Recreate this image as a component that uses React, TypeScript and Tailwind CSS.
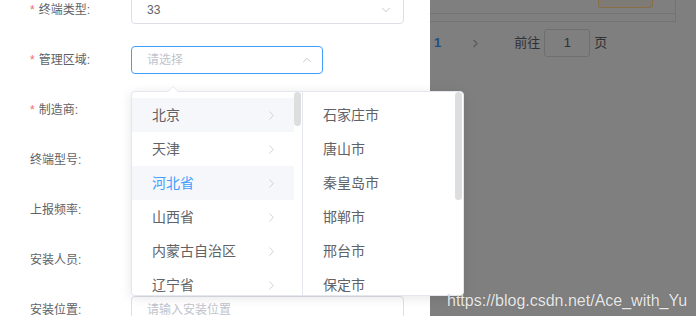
import { ChevronDown, ChevronUp, ChevronRight } from 'lucide-react'

interface Field {
  label: string
  required: boolean
  width: number
  value?: string
  placeholder?: string
  icon?: 'down' | 'up'
  focus?: boolean
}

const fields: Field[] = [
  { label: '终端类型:', required: true, width: 273, value: '33', icon: 'down' },
  { label: '管理区域:', required: true, width: 192, placeholder: '请选择', icon: 'up', focus: true },
  { label: '制造商:', required: true, width: 273 },
  { label: '终端型号:', required: false, width: 273 },
  { label: '上报频率:', required: false, width: 273 },
  { label: '安装人员:', required: false, width: 273 },
  { label: '安装位置:', required: false, width: 273, placeholder: '请输入安装位置' },
]

const provinces = ['北京', '天津', '河北省', '山西省', '内蒙古自治区', '辽宁省']
const cities = ['石家庄市', '唐山市', '秦皇岛市', '邯郸市', '邢台市', '保定市']

export default function App() {
  return (
    <div
      className="relative flex w-[696px] h-[316px] overflow-hidden bg-[#7f7f7f]"
      style={{ fontFamily: '"Liberation Sans", "Noto Sans CJK SC", sans-serif' }}
    >
      {/* Form panel */}
      <div className="w-[430px] h-[316px] bg-white pl-[30px] shrink-0">
        <div className="-mt-[4px]">
          {fields.map((f) => (
            <div key={f.label} className="flex items-center h-[28px] mb-[22px]">
              <div className="w-[101px] text-[12px] text-[#606266] flex items-center">
                {f.required && <span className="text-[#f56c6c] mr-[4px]">*</span>}
                {f.label}
              </div>
              <div
                className={`h-[28px] rounded-[4px] border flex items-center justify-between pl-[15px] pr-[10px] text-[12px] ${
                  f.focus ? 'border-[#409eff]' : 'border-[#dcdfe6]'
                }`}
                style={{ width: f.width }}
              >
                <span className={f.value ? 'text-[#606266]' : 'text-[#c0c4cc]'}>
                  {f.value ?? f.placeholder ?? ''}
                </span>
                {f.icon === 'down' && <ChevronDown size={14} strokeWidth={1.5} className="text-[#c0c4cc]" />}
                {f.icon === 'up' && <ChevronUp size={14} strokeWidth={1.5} className="text-[#c0c4cc] mr-[-2px]" />}
              </div>
            </div>
          ))}
        </div>
      </div>

      {/* Page under the overlay */}
      <div className="flex-1 relative">
        <div className="w-[246px] h-[23px] border-r border-b border-[#737373] -mt-px">
          <div className="h-[15px] border-b border-[#737373] relative">
            <div className="absolute left-[168px] -top-[6px] w-[55px] h-[15px] rounded-[3px] border border-[#8a6d45] bg-[#7e7b76]" />
          </div>
        </div>
        <div className="flex items-center mt-[7px] h-[28px] text-[13px]">
          <span className="ml-[4px] text-[#204f7f] font-bold">1</span>
          <ChevronRight size={13} strokeWidth={2} className="ml-[28px] text-[#5a5a5c]" />
          <span className="ml-[32px] text-[#303133]">前往</span>
          <div className="ml-[4px] w-[46px] h-[28px] rounded-[3px] border border-[#6e6f73] flex items-center justify-center text-[#303133]">
            1
          </div>
          <span className="ml-[4px] text-[#303133]">页</span>
        </div>
      </div>

      {/* Cascader dropdown */}
      <div className="absolute left-[131px] top-[91px] w-[333px] h-[205px] bg-white border border-[#e4e7ed] rounded-[4px] shadow-[0_2px_12px_rgba(0,0,0,0.1)] flex">
        <div className="absolute -top-[6px] left-[35px] w-0 h-0 border-l-[6px] border-r-[6px] border-b-[6px] border-l-transparent border-r-transparent border-b-[#e4e7ed]" />
        <div className="absolute -top-[5px] left-[36px] w-0 h-0 border-l-[5px] border-r-[5px] border-b-[5px] border-l-transparent border-r-transparent border-b-white" />

        <div className="relative w-[171px] h-full border-r border-[#e4e7ed] overflow-hidden">
          <div className="pt-[6px] w-[162px]">
            {provinces.map((p) => (
              <div
                key={p}
                className={`h-[34px] flex items-center justify-between pl-[20px] pr-[15px] text-[14px] ${
                  p === '北京' || p === '河北省' ? 'bg-[#f5f7fa]' : ''
                } ${p === '河北省' ? 'text-[#409eff]' : 'text-[#606266]'}`}
              >
                <span>{p}</span>
                <ChevronRight size={15} strokeWidth={1.2} className="text-[#c0c4cc]" />
              </div>
            ))}
          </div>
          <div className="absolute right-[1px] top-0 w-[7px] h-[34px] rounded-[4px] bg-[#dddee0]" />
        </div>

        <div className="relative flex-1 h-full overflow-hidden">
          <div className="pt-[6px]">
            {cities.map((c) => (
              <div key={c} className="h-[34px] flex items-center pl-[20px] text-[14px] text-[#606266]">
                {c}
              </div>
            ))}
          </div>
          <div className="absolute right-[1px] top-0 w-[7px] h-[108px] rounded-[4px] bg-[#dddee0]" />
        </div>
      </div>

      {/* Watermark */}
      <div className="absolute left-[447px] top-[289px] text-[16px] text-[#e8e8e8] [text-shadow:0_0_1px_rgba(0,0,0,0.3)]">
        https://blog.csdn.net/Ace_with_Yu
      </div>
    </div>
  )
}
